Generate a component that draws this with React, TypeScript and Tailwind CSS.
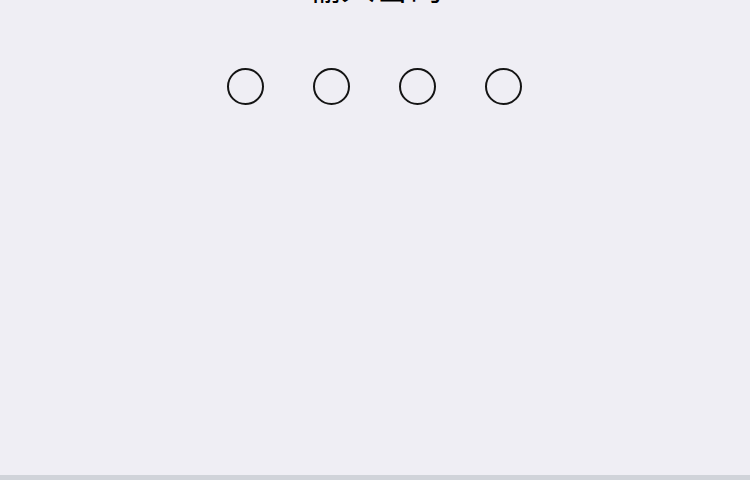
export default function App() {
  const dots = [0, 1, 2, 3];
  return (
    <div className="h-screen w-full flex flex-col bg-[#efeef4] overflow-hidden font-['Noto_Sans_CJK_SC',sans-serif]">
      <div className="flex-1 flex flex-col items-center">
        <h1 className="mt-[-34px] text-[34px] leading-[40px] text-black">输入密码</h1>
        <div className="mt-[62px] ml-[-2px] flex gap-[49px]">
          {dots.map((d) => (
            <div key={d} className="w-[37px] h-[37px] rounded-full border-2 border-[#141414]" />
          ))}
        </div>
      </div>
      <div className="h-[5px] bg-[#d0d3d9]" />
    </div>
  );
}
